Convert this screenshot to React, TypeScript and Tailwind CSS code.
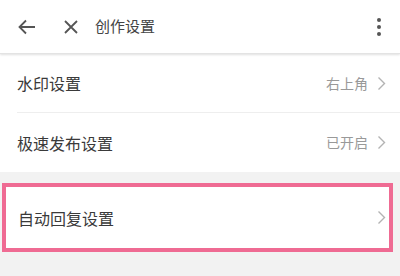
const font = { fontFamily: '"Noto Sans CJK SC", "Noto Sans", sans-serif' };

const Chevron = () => (
  <svg width="9" height="15" viewBox="0 0 9 15" fill="none" className="shrink-0">
    <path d="M1.5 1.5 L7.5 7.5 L1.5 13.5" stroke="#b3b3b3" strokeWidth="1.4" />
  </svg>
);

const rows = [
  { title: "水印设置", value: "右上角" },
  { title: "极速发布设置", value: "已开启" },
];

export default function App() {
  return (
    <div
      className="w-[400px] h-[276px] bg-[#f2f2f2] flex flex-col overflow-hidden"
      style={font}
    >
      <div className="h-[54px] bg-white flex items-center shadow-[0_1px_2px_rgba(0,0,0,0.12)] border-b border-[#e3e3e3] relative z-10">
        <svg width="18" height="16" viewBox="0 0 18 16" fill="none" className="ml-[18px]">
          <path d="M17 8 H2 M8 1.5 L1.5 8 L8 14.5" stroke="#555" strokeWidth="1.8" />
        </svg>
        <svg width="14" height="14" viewBox="0 0 14 14" fill="none" className="ml-[28px]">
          <path d="M1 1 L13 13 M13 1 L1 13" stroke="#555" strokeWidth="1.8" />
        </svg>
        <span className="ml-[17px] text-[15px] text-[#444]">创作设置</span>
        <div className="ml-auto mr-[19px] flex flex-col gap-[3px]">
          <span className="w-[4px] h-[4px] rounded-full bg-[#555]" />
          <span className="w-[4px] h-[4px] rounded-full bg-[#555]" />
          <span className="w-[4px] h-[4px] rounded-full bg-[#555]" />
        </div>
      </div>

      <div className="bg-white">
        {rows.map((r, i) => (
          <div key={i} className="pl-[17px]">
            <div
              className={
                "h-[59px] flex items-center pr-[14px] " +
                (i === 0 ? "border-b border-[#eeeeee]" : "")
              }
            >
              <span className="text-[16px] text-[#3a3a3a]">{r.title}</span>
              <span className="ml-auto text-[14px] text-[#999] mr-[9px]">{r.value}</span>
              <Chevron />
            </div>
          </div>
        ))}
      </div>

      <div className="mt-[11px] ml-[2px] w-[391px] h-[69px] border-[4px] border-[#ef6b93] bg-white flex items-center pl-[12px] pr-[3px]">
        <span className="text-[16px] text-[#3a3a3a]">自动回复设置</span>
        <span className="ml-auto">
          <Chevron />
        </span>
      </div>
    </div>
  );
}
